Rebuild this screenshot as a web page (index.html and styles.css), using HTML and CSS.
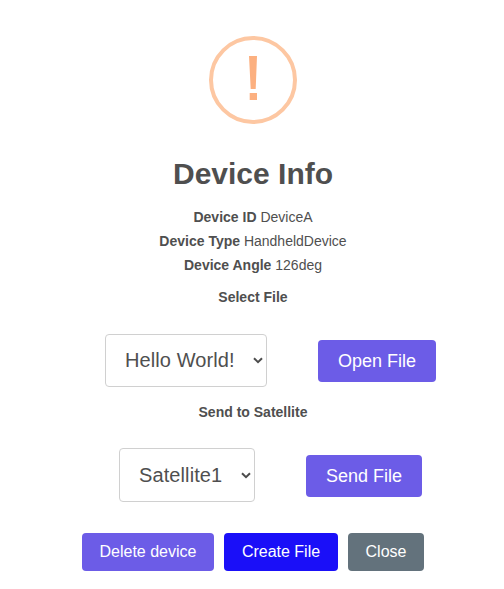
FILE: index.html
```html
<!DOCTYPE html>
<html lang="en">
<head>
<meta charset="utf-8">
<title>Device Info</title>
<link rel="stylesheet" href="styles.css">
</head>
<body>
<main class="popup">
  <div class="warning-icon">
    <svg width="10" height="46" viewBox="0 0 10 46" aria-hidden="true"><path d="M1 1H9L7.7 34H2.7ZM1.7 38H9V45H1.7Z"/></svg>
  </div>
  <h1 class="title">Device Info</h1>
  <div class="details">
    <p class="line"><b>Device ID</b> DeviceA</p>
    <p class="line"><b>Device Type</b> HandheldDevice</p>
    <p class="line"><b>Device Angle</b> 126deg</p>
  </div>
  <label class="label" for="file">Select File</label>
  <div class="row">
    <div class="select-box file">
      <select class="select" id="file"><option>Hello World!</option></select>
      <svg class="chevron" width="10" height="7" viewBox="0 0 10 7" aria-hidden="true"><path d="M1 1.2L5 5.2L9 1.2"/></svg>
    </div>
    <button class="button large open">Open File</button>
  </div>
  <label class="label" for="satellite">Send to Satellite</label>
  <div class="row second">
    <div class="select-box satellite">
      <select class="select" id="satellite"><option>Satellite1</option></select>
      <svg class="chevron" width="10" height="7" viewBox="0 0 10 7" aria-hidden="true"><path d="M1 1.2L5 5.2L9 1.2"/></svg>
    </div>
    <button class="button large send">Send File</button>
  </div>
  <div class="actions">
    <button class="button delete">Delete device</button>
    <button class="button create">Create File</button>
    <button class="button close">Close</button>
  </div>
</main>
</body>
</html>
```
FILE: styles.css
```css
* { box-sizing: border-box; }
body {
  margin: 0;
  background: #fff;
  color: #4f4f4f;
  font-family: "Liberation Sans", Arial, sans-serif;
}
.popup {
  display: flex;
  flex-direction: column;
  align-items: center;
  height: 589px;
  padding: 36px 0 0 2px;
}
.warning-icon {
  display: flex;
  align-items: center;
  justify-content: center;
  width: 88px;
  height: 88px;
  border: 4px solid #fdc7a2;
  border-radius: 50%;
}
.warning-icon svg { margin-top: -4px; fill: #fcb080; }
.title {
  margin: 32px 0 0;
  font-size: 30px;
  line-height: 36px;
}
.details { margin-top: 13px; text-align: center; }
.line { margin: 0; font-size: 14px; line-height: 24px; }
.label {
  margin-top: 8px;
  font-size: 14px;
  font-weight: bold;
  line-height: 24px;
}
.row {
  display: flex;
  align-items: center;
  gap: 51px;
  height: 53px;
  margin: 25px 0 5px 35px;
}
.second { height: 54px; margin: 24px 0 0 35px; }
.select-box { position: relative; height: 100%; }
.file { width: 162px; }
.satellite { width: 136px; }
.select {
  appearance: none;
  width: 100%;
  height: 100%;
  padding: 0 0 0 19px;
  border: 1px solid #d0d0d0;
  border-radius: 4px;
  background: #fff;
  color: #4f4f4f;
  font: 20px "Liberation Sans", Arial, sans-serif;
  letter-spacing: 0.1px;
}
.file .select { padding-bottom: 2px; }
.chevron {
  position: absolute;
  right: 4px;
  top: 23px;
  fill: none;
  stroke: #4c4c4c;
  stroke-width: 2;
}
.satellite .chevron { top: 24px; }
.button {
  height: 38px;
  padding: 0;
  border: 0;
  border-radius: 4px;
  background: #6c5ce7;
  color: #fff;
  font: 16px "Liberation Sans", Arial, sans-serif;
}
.large { height: 42px; padding-top: 1px; font-size: 18px; }
.open { width: 118px; }
.send { width: 116px; margin-top: 1px; }
.actions { display: flex; gap: 10px; margin-top: 31px; }
.delete { width: 132px; }
.create { width: 114px; background: #1a0ff8; }
.close { width: 76px; background: #63727c; }
```
